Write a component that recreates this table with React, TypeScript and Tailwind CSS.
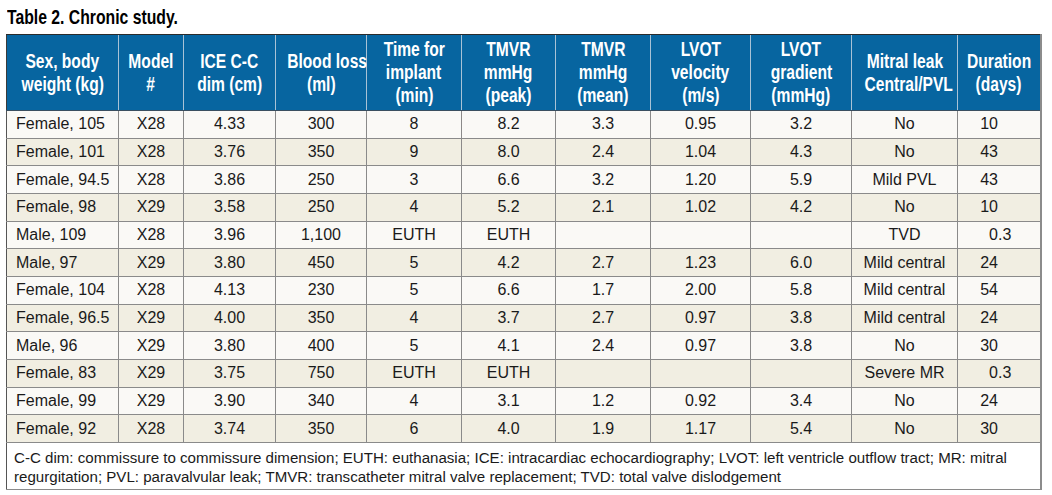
import React from "react";

const headers: string[][] = [
  ["Sex, body", "weight (kg)"],
  ["Model", "#"],
  ["ICE C-C", "dim (cm)"],
  ["Blood loss", "(ml)"],
  ["Time for", "implant", "(min)"],
  ["TMVR", "mmHg", "(peak)"],
  ["TMVR", "mmHg", "(mean)"],
  ["LVOT", "velocity", "(m/s)"],
  ["LVOT", "gradient", "(mmHg)"],
  ["Mitral leak", "Central/PVL"],
  ["Duration", "(days)"],
];

const widths = [112, 65, 92, 91, 95, 94, 95, 100, 101, 106, 83];

const rows: string[][] = [
  ["Female, 105", "X28", "4.33", "300", "8", "8.2", "3.3", "0.95", "3.2", "No", "10"],
  ["Female, 101", "X28", "3.76", "350", "9", "8.0", "2.4", "1.04", "4.3", "No", "43"],
  ["Female, 94.5", "X28", "3.86", "250", "3", "6.6", "3.2", "1.20", "5.9", "Mild PVL", "43"],
  ["Female, 98", "X29", "3.58", "250", "4", "5.2", "2.1", "1.02", "4.2", "No", "10"],
  ["Male, 109", "X28", "3.96", "1,100", "EUTH", "EUTH", "", "", "", "TVD", "0.3"],
  ["Male, 97", "X29", "3.80", "450", "5", "4.2", "2.7", "1.23", "6.0", "Mild central", "24"],
  ["Female, 104", "X28", "4.13", "230", "5", "6.6", "1.7", "2.00", "5.8", "Mild central", "54"],
  ["Female, 96.5", "X29", "4.00", "350", "4", "3.7", "2.7", "0.97", "3.8", "Mild central", "24"],
  ["Male, 96", "X29", "3.80", "400", "5", "4.1", "2.4", "0.97", "3.8", "No", "30"],
  ["Female, 83", "X29", "3.75", "750", "EUTH", "EUTH", "", "", "", "Severe MR", "0.3"],
  ["Female, 99", "X29", "3.90", "340", "4", "3.1", "1.2", "0.92", "3.4", "No", "24"],
  ["Female, 92", "X28", "3.74", "350", "6", "4.0", "1.9", "1.17", "5.4", "No", "30"],
];

function Duration({ v }: { v: string }) {
  const [i, d] = v.split(".");
  return (
    <div className="flex">
      <span className="w-[40px] text-right">{i}</span>
      {d !== undefined && <span>.{d}</span>}
    </div>
  );
}

export default function App() {
  return (
    <div className="w-[1052px] h-[495px] bg-white text-[#1a1a1a] font-['Liberation_Sans',sans-serif]">
      <div className="h-[34px] pl-[7px] flex items-center pb-[1px]">
        <span className="inline-block origin-left scale-x-[0.75] whitespace-nowrap text-[21px] leading-[24px] font-bold text-black">
          Table 2. Chronic study.
        </span>
      </div>
      <table className="ml-[6px] w-[1034px] table-fixed border-collapse">
        <colgroup>
          {widths.map((w, i) => (
            <col key={i} style={{ width: w }} />
          ))}
        </colgroup>
        <thead>
          <tr className="h-[76px] bg-[#0765a0]">
            {headers.map((h, i) => (
              <th
                key={i}
                className={`p-0 text-white font-bold text-[20px] leading-[23px] text-center align-middle border-t border-t-[#2b2b2b] border-b border-b-[#3a4f60] ${
                  i === 0 ? "border-l border-l-[#3a3a3a]" : "border-l border-l-[#a8c2d6]"
                } ${i === headers.length - 1 ? "border-r-2 border-r-[#8c8c8c]" : ""}`}
              >
                {h.map((line, j) => (
                  <div key={j} className="whitespace-nowrap">
                    <span className="inline-block scale-x-[0.78]">{line}</span>
                  </div>
                ))}
              </th>
            ))}
          </tr>
        </thead>
        <tbody>
          {rows.map((r, ri) => (
            <tr key={ri} className={`h-[27.67px] ${ri % 2 === 0 ? "bg-[#faf9f6]" : "bg-[#f1eee2]"}`}>
              {r.map((c, ci) => (
                <td
                  key={ci}
                  className={`p-0 text-[16px] leading-[20px] align-middle border border-[#8a8a8a] ${
                    ci === 0 ? "text-left pl-[9px] border-l-[#555555]" : "text-center"
                  } ${ci === 8 ? "border-l-[#3a3a3a]" : ""} ${ci === 10 ? "border-r-2 border-r-[#8c8c8c]" : ""}`}
                >
                  {ci === 10 ? <Duration v={c} /> : c}
                </td>
              ))}
            </tr>
          ))}
          <tr>
            <td
              colSpan={11}
              className="h-[47px] bg-white align-top pt-[5px] pb-[3px] pl-[7px] text-[15.1px] leading-[19px] whitespace-nowrap border border-[#8a8a8a] border-r-2 border-r-[#8c8c8c] border-l-[#555555]"
            >
              C-C dim: commissure to commissure dimension; EUTH: euthanasia; ICE: intracardiac echocardiography; LVOT: left ventricle outflow tract; MR: mitral
              <br />
              regurgitation; PVL: paravalvular leak; TMVR: transcatheter mitral valve replacement; TVD: total valve dislodgement
            </td>
          </tr>
        </tbody>
      </table>
    </div>
  );
}
